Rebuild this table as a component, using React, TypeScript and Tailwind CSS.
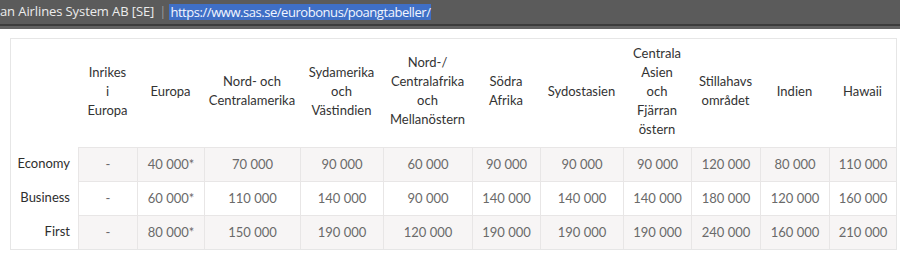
import React from 'react';

const regions: { w: number; label: React.ReactNode }[] = [
  { w: 59, label: <>Inrikes<br />i<br />Europa</> },
  { w: 67, label: <>Europa</> },
  { w: 96, label: <>Nord- och<br />Centralamerika</> },
  { w: 83, label: <>Sydamerika<br />och<br />Västindien</> },
  { w: 89, label: <>Nord-/<br />Centralafrika<br />och<br />Mellanöstern</> },
  { w: 68, label: <>Södra<br />Afrika</> },
  { w: 83, label: <>Sydostasien</> },
  { w: 68, label: <>Centrala<br />Asien<br />och<br />Fjärran<br />östern</> },
  { w: 69, label: <>Stillahavs<br />området</> },
  { w: 69, label: <>Indien</> },
  { w: 67, label: <>Hawaii</> },
];

const rows = [
  { name: 'Economy', values: ['-', '40 000*', '70 000', '90 000', '60 000', '90 000', '90 000', '90 000', '120 000', '80 000', '110 000'], shade: true },
  { name: 'Business', values: ['-', '60 000*', '110 000', '140 000', '90 000', '140 000', '140 000', '140 000', '180 000', '120 000', '160 000'], shade: false },
  { name: 'First', values: ['-', '80 000*', '150 000', '190 000', '120 000', '190 000', '190 000', '190 000', '240 000', '160 000', '210 000'], shade: true },
];

export default function App() {
  return (
    <div className="w-[900px] h-[261px] bg-white overflow-hidden">
      {/* browser address strip */}
      <div className="h-[24px] bg-[#5b5b5b] flex items-center whitespace-nowrap text-[13px] font-['Open_Sans',sans-serif] text-[#ececec]">
        <span className="tracking-[-0.1px]">an Airlines System AB [SE]</span>
        <span className="ml-[5px] text-[#9a9a9a]">|</span>
        <span className="ml-[3px] bg-[#3f6fc6] text-[#f2f6ff] px-[1px] leading-[16px] tracking-[-0.45px]">
          https://www.sas.se/eurobonus/poangtabeller/
        </span>
      </div>
      <div className="h-[2px] bg-[#3c3c3c]" />
      <div className="h-[3px] bg-[#626262]" />

      <div className="ml-[10px] mt-[9px] w-[887px] border border-[#e6e6e6] font-['Lato',sans-serif] text-[13px]">
        <table className="table-fixed border-separate border-spacing-0 w-[885px]">
          <thead>
            <tr className="h-[108px]">
              <th className="w-[67px]" />
              {regions.map((r, i) => (
                <th key={i} style={{ width: r.w }} className="font-normal text-[#333] leading-[19px] text-center align-middle pb-[4px]">
                  {r.label}
                </th>
              ))}
            </tr>
          </thead>
          <tbody>
            {rows.map((row) => (
              <tr key={row.name} className="h-[34px]">
                <td className="text-right pr-[8px] text-[#2e2e2e] bg-white">{row.name}</td>
                {row.values.map((v, i) => (
                  <td
                    key={i}
                    className={`text-center text-[#6a6a6a] border-t border-l border-[#e8e6e6] ${row.shade ? 'bg-[#f7f5f5]' : 'bg-white'}`}
                  >
                    {v}
                  </td>
                ))}
              </tr>
            ))}
          </tbody>
        </table>
      </div>
    </div>
  );
}
